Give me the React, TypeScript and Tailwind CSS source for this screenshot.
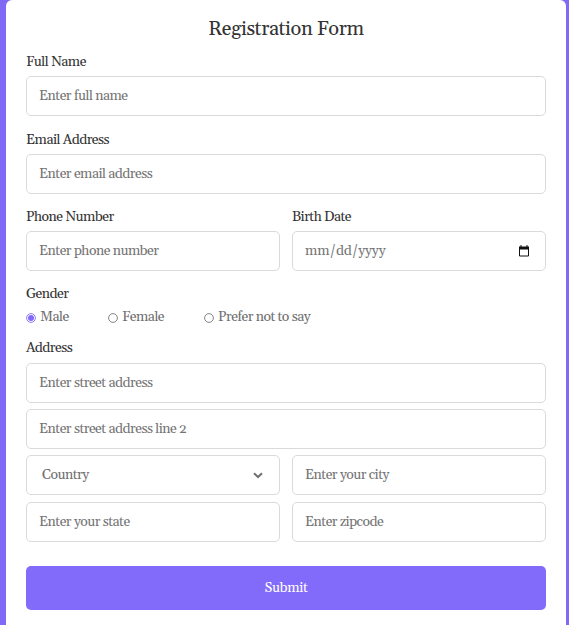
import React from 'react';

const control =
  'block h-10 w-full rounded-[5px] border border-[#dadada] bg-white px-3 text-[14px] tracking-[-0.54px] text-[#707070] outline-none placeholder:text-[#757575] placeholder:opacity-100';

function Label({ children }: { children: React.ReactNode }) {
  return <label className="mb-[3px] block leading-[21px] text-[#333]">{children}</label>;
}

function Option({ label, checked = false, className }: { label: string; checked?: boolean; className: string }) {
  return (
    <label className={`flex items-center whitespace-nowrap text-[#707070] ${className}`}>
      <input type="radio" name="gender" defaultChecked={checked} className="peer sr-only" />
      <svg viewBox="0 0 10 10" className="mr-1 size-[10px] shrink-0">
        <circle cx="5" cy="5" r="4.4" fill="white" stroke={checked ? '#826afb' : '#767676'} strokeWidth="0.9" />
        {checked && <circle cx="5" cy="5" r="3" fill="#826afb" />}
      </svg>
      {label}
    </label>
  );
}

export default function App() {
  return (
    <main className="h-[625px] w-[569px] overflow-hidden bg-[#8069f5] pr-[3px] pl-[6px] font-[Georgia,Gelasio,'Liberation_Serif',serif] text-[14px] tracking-[-0.54px] oldstyle-nums">
      <form className="h-full rounded-t-[6px] bg-white px-5 pt-[17px]" onSubmit={(e) => e.preventDefault()}>
        <h1 className="text-center text-[20px] leading-6 tracking-[-0.4px] text-[#333]">Registration Form</h1>
        <div className="mt-[11px]">
          <Label>Full Name</Label>
          <input placeholder="Enter full name" className={control} />
        </div>
        <div className="mt-[14px]">
          <Label>Email Address</Label>
          <input placeholder="Enter email address" className={control} />
        </div>
        <div className="mt-[13px] grid grid-cols-2 gap-3">
          <div>
            <Label>Phone Number</Label>
            <input placeholder="Enter phone number" className={control} />
          </div>
          <div>
            <Label>Birth Date</Label>
            <div className="flex h-10 items-center justify-between rounded-[5px] border border-[#dadada] pr-[15px] pl-3 text-[#757575]">
              <span className="tracking-[-0.1px]">mm/dd/yyyy</span>
              <svg viewBox="0 0 12 12" className="size-3">
                <path d="M1.5 2.5h9v8.5h-9z" fill="none" stroke="#111" />
                <path d="M1 1.5h10v3H1zM2.5 0h1v2h-1zM8.5 0h1v2h-1z" fill="#111" />
              </svg>
            </div>
          </div>
        </div>
        <div className="mt-[13px]">
          <div className="leading-[21px] text-[#333]">Gender</div>
          <div className="relative mt-[2px] flex h-[21px] items-center">
            <Option label="Male" checked className="w-[82px]" />
            <Option label="Female" className="w-[96px]" />
            <Option label="Prefer not to say" className="w-[120px]" />
          </div>
        </div>
        <div className="mt-[10px]">
          <div className="mb-1 leading-[21px] text-[#333]">Address</div>
          <div className="flex flex-col gap-[6px]">
            <input placeholder="Enter street address" className={control} />
            <input placeholder="Enter street address line 2" className={control} />
            <div className="grid grid-cols-2 gap-x-3 gap-y-[7px]">
              <div className="flex h-10 items-center justify-between rounded-[5px] border border-[#dadada] pr-4 pl-[15px] text-[#707070]">
                Country
                <svg viewBox="0 0 10 7" className="h-[7px] w-[10px]">
                  <path d="M1 1.2L5 5L9 1.2" fill="none" stroke="#707070" strokeWidth="2" />
                </svg>
              </div>
              <input placeholder="Enter your city" className={control} />
              <input placeholder="Enter your state" className={control} />
              <input placeholder="Enter zipcode" className={control} />
            </div>
          </div>
        </div>
        <button className="mt-6 block h-11 w-full rounded-[5px] bg-[#826afb] text-[14px] tracking-[-0.3px] text-white">Submit</button>
      </form>
    </main>
  );
}
